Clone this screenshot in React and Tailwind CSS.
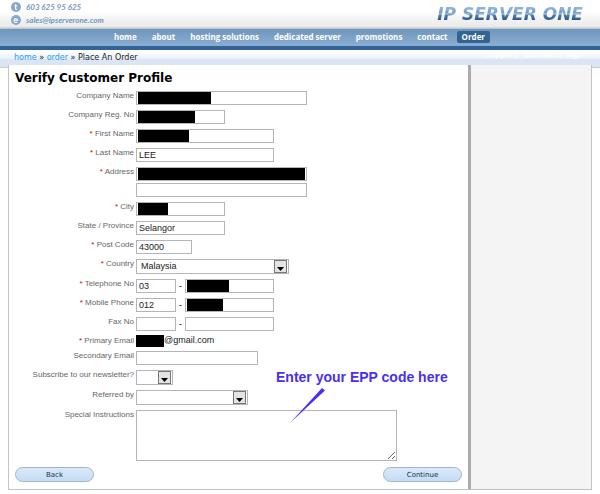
// App.jsx
import React from "react";

const NAV_ITEMS = [
  "home",
  "about",
  "hosting solutions",
  "dedicated server",
  "promotions",
  "contact",
];

const INPUT =
  "block h-[14px] border border-[#b4b4ba] bg-white px-0.5 text-[9px] leading-[12px] text-[#222] outline-none";

function Logo() {
  return (
    <a
      href="#"
      className="bg-[linear-gradient(#8fb4da_20%,#6f9ac8_46%,#d5e3f1_50%,#4f7fb4_54%,#2c568a_80%)] bg-clip-text pr-px font-['DejaVu_Sans'] text-[17px] leading-[20px] font-bold text-transparent italic"
    >
      IP SERVER ONE
    </a>
  );
}

function PhoneIcon() {
  return (
    <svg viewBox="0 0 10 10" className="size-2.5" aria-hidden="true">
      <circle cx="5" cy="5" r="5" fill="#86a8cd" />
      <path
        d="M4.6 2.3v4.2q0 1 1.4.8M3.3 4h3"
        fill="none"
        stroke="#fff"
        strokeWidth="1.2"
      />
    </svg>
  );
}

function MailIcon() {
  return (
    <svg viewBox="0 0 10 10" className="size-2.5" aria-hidden="true">
      <circle cx="5" cy="5" r="5" fill="#86a8cd" />
      <path
        d="M3.2 5.2h3.4A1.8 1.9 0 1 0 6.2 6.8"
        fill="none"
        stroke="#fff"
        strokeWidth="1.1"
      />
    </svg>
  );
}

function Header() {
  return (
    <header>
      <div className="flex h-7 items-start justify-between border-b border-[#d8d8d8] bg-linear-to-b from-white from-40% to-[#e9e9e9] pr-4 pl-[11px] font-['Lato'] text-[8px] font-bold text-[#7797bf] italic">
        <address className="flex flex-col gap-[3px] pt-0.5">
          <span className="flex h-2.5 items-center gap-[5px]">
            <PhoneIcon />
            603 625 95 625
          </span>
          <a href="mailto:sales@ipserverone.com" className="flex h-2.5 items-center gap-[5px]">
            <MailIcon />
            sales@ipserverone.com
          </a>
        </address>
        <div className="flex pt-1">
          <Logo />
        </div>
      </div>
      <nav className="flex h-[22px] items-start justify-end gap-[15px] border-t border-b-4 border-t-[#b9c7d6] border-b-[#336294] bg-linear-to-b from-[#7095bb] to-[#8bafd3] pt-0.5 pr-[110px] font-['Open_Sans'] text-[8px] leading-[12px] font-bold text-white">
        {NAV_ITEMS.map((item) => (
          <a key={item} href="#">
            {item}
          </a>
        ))}
        <a href="#" className="-ml-1.5 rounded-xs bg-[#336294] px-[5px]">
          Order
        </a>
      </nav>
      <div className="flex h-[18px] items-start justify-between border-b border-[#ccc] bg-linear-to-b from-white from-10% via-[#e9f1fa] via-50% to-[#dbe6f5] to-55% pr-[15px] pl-3.5">
        <p className="pt-0.5 font-['DejaVu_Sans'] text-[8px] leading-[12px] text-[#222]">
          <a href="#" className="text-[#2a9bf0]">
            home
          </a>{" "}
          »{" "}
          <a href="#" className="text-[#2a9bf0]">
            order
          </a>{" "}
          » Place An Order
        </p>
        <p className="flex gap-2 font-['Open_Sans'] text-[8px] leading-[8px] font-bold text-white">
          <a href="#">support</a>
          <a href="#">customer login</a>
        </p>
      </div>
    </header>
  );
}

// One form line: label on the left, control(s) on the right
function Row({ label, htmlFor, required, children }) {
  return (
    <div className="grid grid-cols-[119px_1fr] gap-x-0.5">
      <label
        htmlFor={htmlFor}
        className="h-2.5 text-right text-[8px] leading-[10px] text-[#666]"
      >
        {required && <span className="text-[#d00]">* </span>}
        {label}
      </label>
      <div className="flex items-center">{children}</div>
    </div>
  );
}

// Text box with an optional black bar over the private value
function Field({ id, width, mask, value, label }) {
  return (
    <span className={`relative block ${width}`}>
      <input
        id={id}
        type="text"
        aria-label={label}
        defaultValue={value}
        className={`${INPUT} w-full`}
      />
      {mask && (
        <span className={`absolute top-px left-0.5 h-3 bg-black ${mask}`} />
      )}
    </span>
  );
}

function Select({ id, width, options }) {
  return (
    <span className={`relative block ${width}`}>
      <select
        id={id}
        className="block h-[15px] w-full appearance-none border border-[#b4b4ba] bg-white pl-1 text-[9px] leading-[13px] text-[#222] outline-none"
      >
        {options.map((option) => (
          <option key={option}>{option}</option>
        ))}
      </select>
      <span className="pointer-events-none absolute top-px right-0.5 flex size-[13px] items-center justify-center border border-[#777] bg-[#e4e4e4]">
        <svg viewBox="0 0 7 4" className="mt-1 h-1 w-[7px]" aria-hidden="true">
          <path d="M0 0h7L3.5 4z" fill="#000" />
        </svg>
      </span>
    </span>
  );
}

function PhoneRow({ label, id, code, mask, required }) {
  return (
    <Row label={label} htmlFor={id} required={required}>
      <Field id={id} width="w-10" value={code} />
      <span className="w-[9px] text-center text-[9px] leading-[12px]">-</span>
      <Field width="w-[89px]" mask={mask} label={`${label} number`} />
    </Row>
  );
}

function PillButton({ children }) {
  return (
    <button
      type="button"
      className="h-[15px] w-[79px] rounded-full border border-[#9fb6d2] bg-linear-to-b from-[#d9e9fa] to-[#c6dcf4] font-['DejaVu_Sans'] text-[7px] leading-[12px] text-[#234]"
    >
      {children}
    </button>
  );
}

function Callout() {
  return (
    <div className="pointer-events-none absolute bottom-[66px] left-[266px] text-[#4a2ff0]">
      <p className="pl-px text-[14px] leading-[20px] font-bold whitespace-nowrap">
        Enter your EPP code here
      </p>
      <svg viewBox="0 0 36 36" className="ml-[15px] size-9" aria-hidden="true">
        <path d="M0 36L32 1l3 2.5z" fill="currentColor" />
      </svg>
    </div>
  );
}

function ProfileForm() {
  return (
    <form className="relative flex-1 px-1.5 pb-[7px]">
      <h1 className="font-['DejaVu_Sans'] text-[12px] leading-[26px] font-bold text-black">
        Verify Customer Profile
      </h1>
      <div className="flex flex-col gap-[5px]">
        <Row label="Company Name" htmlFor="company">
          <Field id="company" width="w-[171px]" mask="w-[73px]" />
        </Row>
        <Row label="Company Reg. No" htmlFor="reg">
          <Field id="reg" width="w-[89px]" mask="w-[57px]" />
        </Row>
        <Row label="First Name" htmlFor="first" required>
          <Field id="first" width="w-[138px]" mask="w-[51px]" />
        </Row>
        <Row label="Last Name" htmlFor="last" required>
          <Field id="last" width="w-[138px]" value="LEE" />
        </Row>
        <Row label="Address" htmlFor="address" required>
          <div className="flex flex-col gap-0.5">
            <Field id="address" width="w-[171px]" mask="w-[167px]" />
            <Field width="w-[171px]" label="Address line 2" />
          </div>
        </Row>
        <Row label="City" htmlFor="city" required>
          <Field id="city" width="w-[89px]" mask="w-[30px]" />
        </Row>
        <Row label="State / Province" htmlFor="state">
          <Field id="state" width="w-[89px]" value="Selangor" />
        </Row>
        <Row label="Post Code" htmlFor="post" required>
          <Field id="post" width="w-14" value="43000" />
        </Row>
        <Row label="Country" htmlFor="country" required>
          <Select id="country" width="w-[153px]" options={["Malaysia"]} />
        </Row>
        <PhoneRow label="Telephone No" id="tel" code="03" mask="w-[42px]" required />
        <PhoneRow label="Mobile Phone" id="mobile" code="012" mask="w-9" required />
        <PhoneRow label="Fax No" id="fax" code="" />
        <Row label="Primary Email" htmlFor="email" required>
          <output id="email" className="flex h-2.5 items-center text-[9px] text-[#222]">
            <span className="h-3 w-7 bg-black" />
            @gmail.com
          </output>
        </Row>
        <Row label="Secondary Email" htmlFor="email2">
          <Field id="email2" width="w-[122px]" />
        </Row>
        <Row label="Subscribe to our newsletter?" htmlFor="newsletter">
          <Select id="newsletter" width="w-[37px]" options={[""]} />
        </Row>
        <Row label="Referred by" htmlFor="referred">
          <Select id="referred" width="w-28" options={[""]} />
        </Row>
        <Row label="Special Instructions" htmlFor="instructions">
          <textarea
            id="instructions"
            className="block h-[51px] w-[261px] border border-[#b4b4ba] bg-white px-0.5 text-[9px] outline-none"
          />
        </Row>
      </div>
      <div className="mt-1.5 flex justify-between">
        <PillButton>Back</PillButton>
        <PillButton>Continue</PillButton>
      </div>
      <Callout />
    </form>
  );
}

function App() {
  return (
    <div className="bg-white font-['Liberation_Sans',sans-serif]">
      <Header />
      <main className="relative mx-2 -mt-[3px] flex border border-t-0 border-[#c4c4c4] bg-white">
        <ProfileForm />
        <aside className="w-[123px] border-l-3 border-[#aaa] bg-[#f4f4f4]" />
      </main>
    </div>
  );
}

export default App;
